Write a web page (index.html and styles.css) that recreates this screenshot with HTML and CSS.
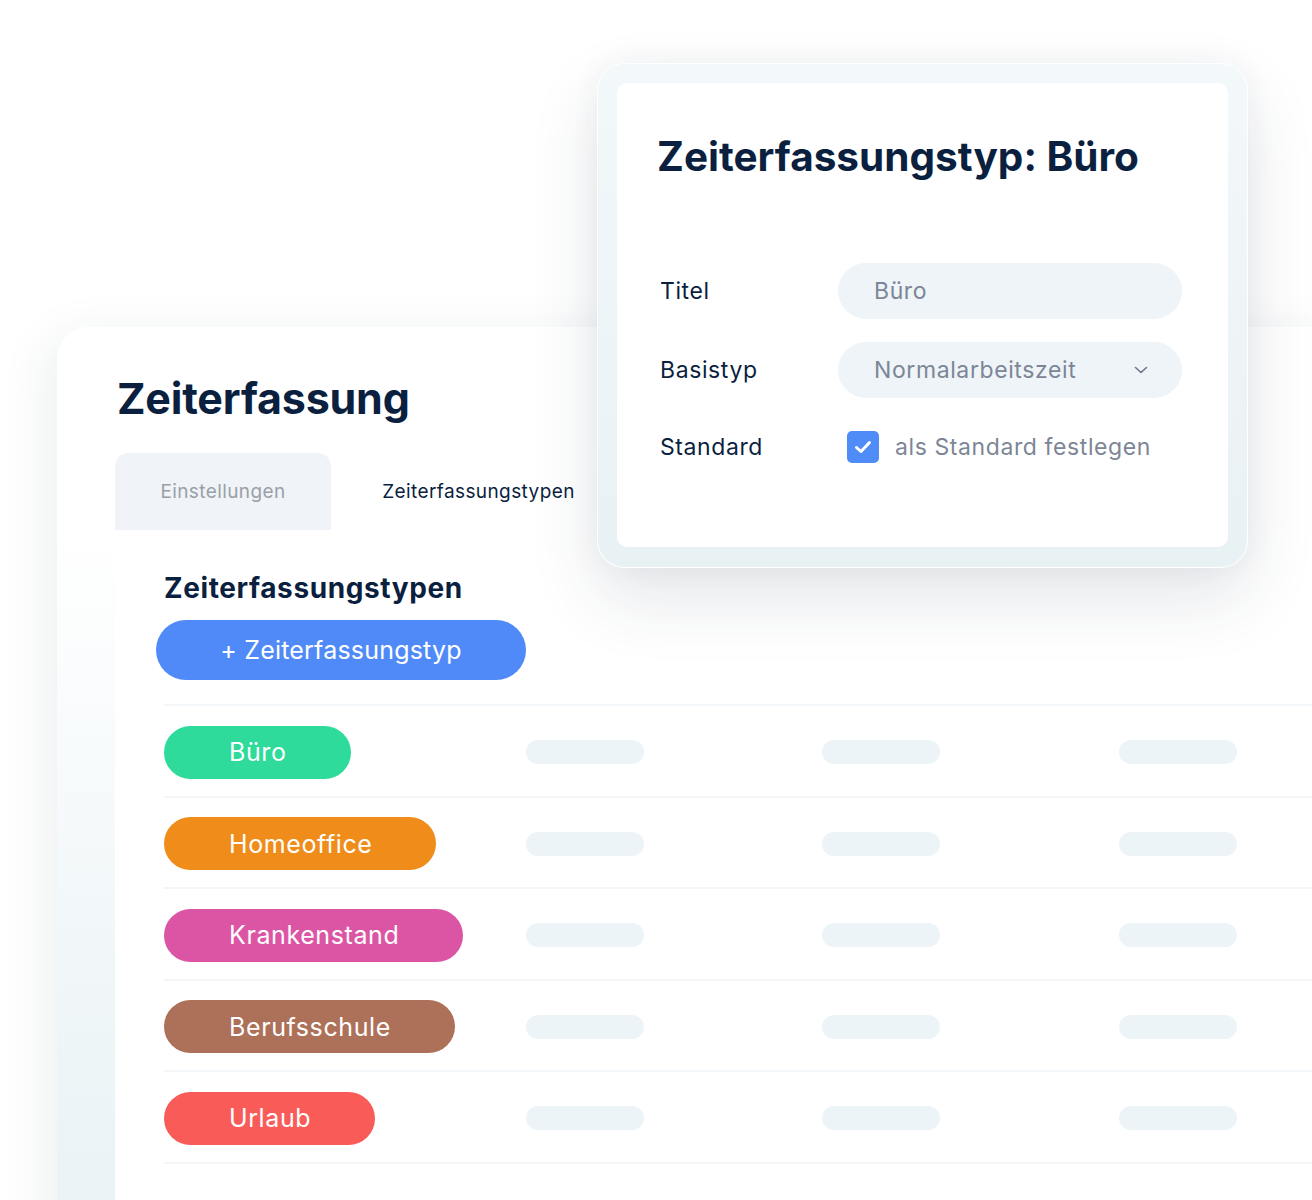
FILE: index.html
```html
<!DOCTYPE html>
<html lang="de">
<head>
<meta charset="utf-8">
<title>Zeiterfassung</title>
<link rel="stylesheet" href="styles.css">
</head>
<body>
<div class="stage">
  <section class="main-card">
    <h1 class="main-title">Zeiterfassung</h1>
    <nav class="tabs">
      <div class="tab tab-inactive">Einstellungen</div>
      <div class="tab tab-active">Zeiterfassungstypen</div>
    </nav>
    <div class="panel">
      <h2 class="section-title">Zeiterfassungstypen</h2>
      <button class="add-btn">+ Zeiterfassungstyp</button>
      <div class="rows">
        <div class="row"><span class="pill pill-green">Büro</span><span class="skel"></span><span class="skel"></span><span class="skel"></span></div>
        <div class="row"><span class="pill pill-orange">Homeoffice</span><span class="skel"></span><span class="skel"></span><span class="skel"></span></div>
        <div class="row"><span class="pill pill-pink">Krankenstand</span><span class="skel"></span><span class="skel"></span><span class="skel"></span></div>
        <div class="row"><span class="pill pill-brown">Berufsschule</span><span class="skel"></span><span class="skel"></span><span class="skel"></span></div>
        <div class="row"><span class="pill pill-red">Urlaub</span><span class="skel"></span><span class="skel"></span><span class="skel"></span></div>
      </div>
    </div>
  </section>

  <section class="dialog">
    <div class="dialog-inner">
      <h2 class="dialog-title">Zeiterfassungstyp: Büro</h2>
      <div class="form">
        <div class="form-row">
          <span class="label">Titel</span>
          <div class="field">Büro</div>
        </div>
        <div class="form-row">
          <span class="label">Basistyp</span>
          <div class="field field-select">
            <span>Normalarbeitszeit</span>
            <svg class="chevron" width="14" height="8" viewBox="0 0 14 8"><path d="M1.5 1.5 L7 6.5 L12.5 1.5" fill="none" stroke="#6b7585" stroke-width="1.6" stroke-linecap="round" stroke-linejoin="round"/></svg>
          </div>
        </div>
        <div class="form-row">
          <span class="label">Standard</span>
          <div class="check-wrap">
            <span class="checkbox">
              <svg width="20" height="16" viewBox="0 0 20 16"><path d="M3.5 8.5 L8 12.5 L16.5 3.5" fill="none" stroke="#fff" stroke-width="3" stroke-linecap="round" stroke-linejoin="round"/></svg>
            </span>
            <span class="check-text">als Standard festlegen</span>
          </div>
        </div>
      </div>
    </div>
  </section>
</div>
</body>
</html>
```

FILE: styles.css
```css
* { box-sizing: border-box; }
html, body {
  margin: 0;
  padding: 0;
  background: #ffffff;
}
body {
  width: 1312px;
  height: 1200px;
  overflow: hidden;
  font-family: Inter, "Noto Sans", sans-serif;
  color: #0b1f3f;
}
.stage {
  position: relative;
  width: 1312px;
  height: 1200px;
  overflow: hidden;
  padding-top: 327px;
  padding-left: 57px;
}

/* main card */
.main-card {
  width: 1300px;
  height: 920px;
  border-radius: 32px 0 0 0;
  background: linear-gradient(to bottom, #ffffff 0%, #ffffff 22%, #eaf3f6 90%);
  box-shadow: -10px 10px 50px rgba(30, 50, 70, 0.08);
  display: flex;
  flex-direction: column;
}
.main-title {
  margin: 44px 0 0 60px;
  font-size: 43px;
  line-height: 54px;
  font-weight: 700;
  letter-spacing: -0.2px;
  color: #0b1f3f;
}
.tabs {
  display: flex;
  margin: 28px 0 0 58px;
  height: 77px;
}
.tab {
  display: flex;
  align-items: center;
  justify-content: center;
  font-size: 19px;
  letter-spacing: 0.4px;
  border-radius: 13px 13px 0 0;
}
.tab-inactive {
  width: 216px;
  background: #f0f3f7;
  color: #9aa0a8;
}
.tab-active {
  width: 295px;
  color: #0b1f3f;
}
.panel {
  flex: 1;
  margin-left: 58px;
  background: #ffffff;
  padding: 40px 0 0 49px;
}
.section-title {
  margin: 0;
  font-size: 28px;
  line-height: 36px;
  font-weight: 700;
  letter-spacing: 0.6px;
  color: #0b1f3f;
}
.add-btn {
  display: block;
  margin: 14px 0 0 -8px;
  width: 370px;
  height: 60px;
  border: 0;
  border-radius: 30px;
  background: #4f8af8;
  color: #ffffff;
  font-family: inherit;
  font-size: 25px;
  letter-spacing: 0.2px;
  font-weight: 400;
}
.rows {
  margin-top: 24px;
  border-top: 2px solid #f3f6f8;
}
.row {
  height: 91.5px;
  padding-top: 3px;
  border-bottom: 2px solid #f3f6f8;
  display: grid;
  grid-template-columns: 362px 296px 297px 118px;
  align-items: center;
}
.pill {
  justify-self: start;
  height: 53px;
  border-radius: 27px;
  padding: 0 64px 0 65px;
  display: flex;
  align-items: center;
  color: #ffffff;
  font-size: 25px;
  letter-spacing: 0.6px;
}
.pill-green { background: #2edb9b; }
.pill-orange { background: #f08c1a; }
.pill-pink { background: #dc55a5; }
.pill-brown { background: #ad7058; }
.pill-red { background: #f95b59; }
.skel {
  width: 118px;
  height: 24px;
  border-radius: 12px;
  background: #edf4f8;
}

/* dialog */
.dialog {
  position: absolute;
  left: 597px;
  top: 63px;
  width: 651px;
  height: 505px;
  padding: 19px 19px 20px 19px;
  border-radius: 28px;
  background: linear-gradient(to bottom, #f3f8fa, #e8f1f4);
  border: 1.5px solid #ffffff;
  box-shadow: 0 30px 70px rgba(30, 50, 70, 0.12), 0 0 30px rgba(30, 50, 70, 0.05);
}
.dialog-inner {
  height: 100%;
  background: #ffffff;
  border-radius: 10px;
  padding: 48px 46px 0 40px;
}
.dialog-title {
  margin: 0;
  font-size: 40.5px;
  line-height: 52px;
  font-weight: 700;
  color: #0b1f3f;
}
.form {
  margin-top: 80px;
  display: flex;
  flex-direction: column;
  gap: 23px;
}
.form-row {
  display: grid;
  grid-template-columns: 181px 1fr;
  align-items: center;
  height: 56px;
}
.form-row:last-child { margin-top: -2px; }
.label {
  padding-left: 3px;
  font-size: 23px;
  letter-spacing: 0.6px;
  color: #0b1f3f;
}
.field {
  height: 56px;
  border-radius: 28px;
  background: #eef4f8;
  padding: 0 36px;
  display: flex;
  align-items: center;
  font-size: 23px;
  letter-spacing: 0.6px;
  color: #7c8696;
}
.field-select {
  justify-content: space-between;
  padding-right: 34px;
}
.chevron { display: block; }
.check-wrap {
  display: flex;
  align-items: center;
  gap: 16px;
  padding-left: 9px;
}
.checkbox {
  width: 32px;
  height: 32px;
  border-radius: 5px;
  background: #4f8cf7;
  display: flex;
  align-items: center;
  justify-content: center;
}
.checkbox svg { display: block; }
.check-text {
  font-size: 23px;
  letter-spacing: 0.6px;
  color: #7c8696;
}
```
